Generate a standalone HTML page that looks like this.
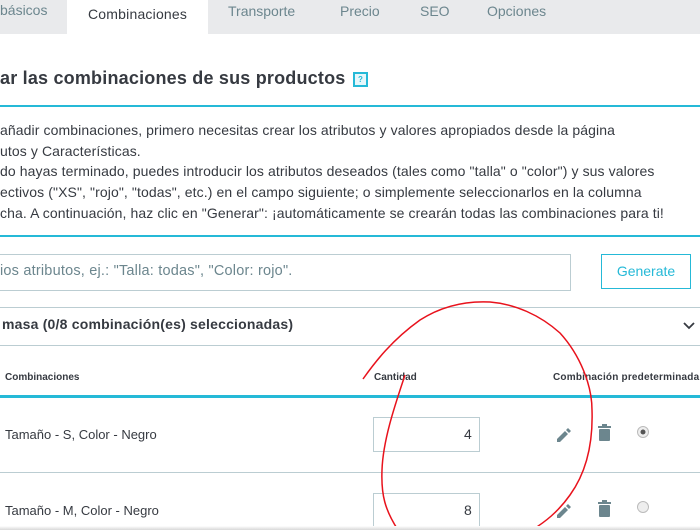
<!DOCTYPE html>
<html><head><meta charset="utf-8"><style>
*{margin:0;padding:0;box-sizing:border-box}
body{width:700px;height:530px;overflow:hidden;background:#fff;font-family:"Liberation Sans",sans-serif;color:#363a41;position:relative}
.a{position:absolute;white-space:nowrap}
.tabs{position:absolute;left:0;top:0;width:700px;height:34px;background:#e9eaec}
.tab{position:absolute;top:3px;font-size:14px;color:#6c868e}
.act{position:absolute;left:67px;top:0;width:141px;height:34px;background:#fff}
.cy{position:absolute;left:0;width:700px;height:2px;background:#25b9d7}
.gl{position:absolute;left:0;width:700px;height:1px;background:#bbcdd2}
p{position:absolute;left:0;top:120px;font-size:14px;letter-spacing:0.1px;line-height:20.7px;color:#363a41;white-space:nowrap}
.inp{position:absolute;border:1px solid #bbcdd2;background:#fff}
</style></head><body>
<div class="tabs"></div>
<div class="act"></div>
<div class="tab a" style="left:0;top:2px">básicos</div>
<div class="tab a" style="left:88px;top:6px;color:#363a41;letter-spacing:0.2px">Combinaciones</div>
<div class="tab a" style="left:228px">Transporte</div>
<div class="tab a" style="left:340px">Precio</div>
<div class="tab a" style="left:420px">SEO</div>
<div class="tab a" style="left:487px">Opciones</div>

<div class="a" style="left:0;top:68px;font-size:18px;font-weight:bold;color:#363a41;letter-spacing:0.2px">ar las combinaciones de sus productos</div>
<div class="a" style="left:353px;top:72px;width:15px;height:15px;border:2px solid #25b9d7;background:#e6f7fb;font-size:8px;color:#25b9d7;text-align:center;line-height:11px;font-weight:bold">?</div>
<div class="cy" style="top:105px"></div>
<p>añadir combinaciones, primero necesitas crear los atributos y valores apropiados desde la página<br>utos y Características.<br>do hayas terminado, puedes introducir los atributos deseados (tales como "talla" o "color") y sus valores<br>ectivos ("XS", "rojo", "todas", etc.) en el campo siguiente; o simplemente seleccionarlos en la columna<br>cha. A continuación, haz clic en "Generar": ¡automáticamente se crearán todas las combinaciones para ti!</p>
<div class="cy" style="top:235px"></div>

<div class="inp" style="left:-2px;top:254px;width:573px;height:37px"></div>
<div class="a" style="left:0;top:263px;font-size:14.5px;color:#6c868e;letter-spacing:0.2px">ios atributos, ej.: "Talla: todas", "Color: rojo".</div>
<div class="a" style="left:601px;top:254px;width:90px;height:35px;border:1px solid #25b9d7;color:#25b9d7;font-size:14px;text-align:center;line-height:33px">Generate</div>

<div class="gl" style="top:307px"></div>
<div class="a" style="left:2px;top:316px;font-size:14px;font-weight:bold;letter-spacing:0.2px">masa (0/8 combinación(es) seleccionadas)</div>
<svg class="a" style="left:682px;top:320px" width="14" height="12" viewBox="0 0 14 12"><path d="M2 3l5 5 5-5" fill="none" stroke="#363a41" stroke-width="1.8"/></svg>
<div class="gl" style="top:345px"></div>

<div class="a" style="left:5px;top:372px;font-size:10px;font-weight:bold">Combinaciones</div>
<div class="a" style="left:374px;top:372px;font-size:10px;font-weight:bold">Cantidad</div>
<div class="a" style="left:553px;top:372px;font-size:10px;font-weight:bold;letter-spacing:0.2px">Combinación predeterminada</div>
<div class="cy" style="top:395px;height:3px"></div>

<div class="a" style="left:5px;top:427px;font-size:13px">Tamaño - S, Color - Negro</div>
<div class="inp" style="left:373px;top:417px;width:107px;height:35px"></div>
<div class="a" style="left:464px;top:426px;font-size:14px">4</div>
<div class="gl" style="top:472px"></div>
<div class="a" style="left:5px;top:503px;font-size:13px">Tamaño - M, Color - Negro</div>
<div class="inp" style="left:373px;top:493px;width:107px;height:35px"></div>
<div class="a" style="left:464px;top:502px;font-size:14px">8</div>

<svg class="a" style="left:0;top:0" width="700" height="530">
<g fill="#6c868e">
<path d="M557 439l8-8 3 3-8 8h-3z M566 430l2-2 3 3-2 2z"/>
<path d="M557 515l8-8 3 3-8 8h-3z M566 506l2-2 3 3-2 2z"/>
<rect x="599" y="429" width="11" height="12" rx="1"/><rect x="598" y="426" width="13" height="2"/><rect x="602" y="424" width="5" height="2"/>
<rect x="599" y="505" width="11" height="12" rx="1"/><rect x="598" y="502" width="13" height="2"/><rect x="602" y="500" width="5" height="2"/>
</g>
<circle cx="643" cy="432" r="5.5" fill="#eee" stroke="#bbb"/><circle cx="643" cy="432" r="2.5" fill="#555"/>
<circle cx="643" cy="507" r="5.5" fill="#eee" stroke="#bbb"/>
<path d="M363 379 C375 362 392 340 420 320 C445 304 470 301 490 302 C515 304 540 315 560 333 C580 355 592 385 592 410 C593 440 588 470 570 495 C558 512 545 522 532 530" fill="none" stroke="#e8121c" stroke-width="1.5"/>
<path d="M405 375 C395 405 383 440 382 470 C381 495 385 510 398 530" fill="none" stroke="#e8121c" stroke-width="1.5"/>
</svg>
<div class="a" style="left:0;top:526px;width:700px;height:4px;background:linear-gradient(#fff,#d8d8d8)"></div>
</body></html>
